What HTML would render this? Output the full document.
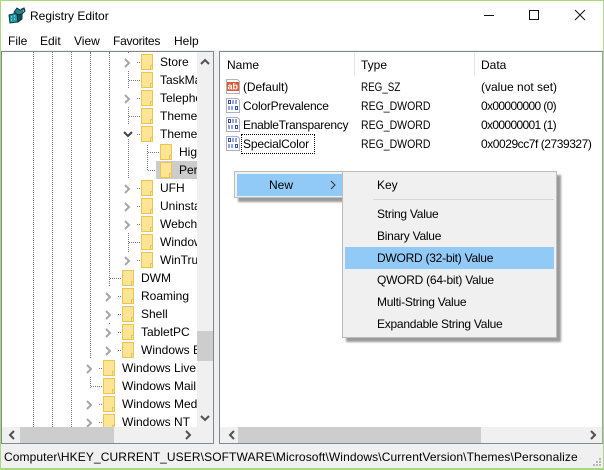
<!DOCTYPE html>
<html><head><meta charset="utf-8"><style>
html,body{margin:0;padding:0;background:#fff}
#w{position:relative;width:604px;height:470px;overflow:hidden;background:#fff;font:12px/16px "Liberation Sans",sans-serif;color:#000}
#w div,#w span,#w svg{position:absolute}
span{white-space:nowrap}
.t{overflow:hidden}
.f{width:10px;height:14px;background:#fde595;border:1px solid #eac552;box-sizing:content-box}
.f:after{content:"";position:absolute;right:-1px;bottom:-1px;width:1px;height:3px;border:1px solid #eac552;background:#fde595}
.v{width:0;border-left:1px dotted #777}
.h{height:0;border-top:1px dotted #777}
.m{background:#fff;height:18px}
.r{transform:scaleX(.875);transform-origin:0 0}
.n{letter-spacing:-.25px}
</style></head><body><div id="w">
<!-- window border -->
<div style="left:0;top:0;width:604px;height:1px;background:#a9d97c"></div>
<div style="left:0;top:0;width:1px;height:470px;background:#a9d97c"></div>
<div style="left:603px;top:0;width:1px;height:470px;background:#a9d97c"></div>
<div style="left:0;top:468px;width:604px;height:2px;background:#a9d97c"></div>

<!-- title -->
<svg style="left:8px;top:7px" width="18" height="17" viewBox="0 0 18 17"><path d="M1 8l8-2 1 9-8 1z" fill="#1f9aa2" stroke="#0b2f3a"/><path d="M9 6l5-2v8l-4 3z" fill="#0d5060" stroke="#0b2f3a"/><path d="M6 5l3-4 3 2 4-2 1 3-3 3-4 1z" fill="#2a7f8a" stroke="#0b2f3a"/><path d="M3 10h1M6 9h1M3 13h1M6 12h1M12 2h1M15 4h1" stroke="#c8f2f2"/></svg>
<span style="left:30px;top:8px">Registry Editor</span>
<div style="left:484px;top:15px;width:10px;height:1px;background:#111"></div>
<div style="left:529px;top:10px;width:8px;height:8px;border:1px solid #111"></div>
<svg style="left:574px;top:9px" width="12" height="12" viewBox="0 0 12 12"><path d="M1 1l10 10M11 1L1 11" stroke="#111" fill="none"/></svg>

<!-- menu -->
<span style="left:8px;top:33px">File</span>
<span style="left:40px;top:33px">Edit</span>
<span style="left:74px;top:33px">View</span>
<span class="n" style="left:113px;top:33px">Favorites</span>
<span style="left:174px;top:33px">Help</span>

<!-- body background -->
<div style="left:1px;top:50px;width:602px;height:395px;background:#f0f0f0"></div>
<!-- left pane -->
<div style="left:1px;top:51px;width:213px;height:393px;background:#fff;border:1px solid #828790;box-sizing:border-box;overflow:hidden"></div>
<div class="t" style="left:2px;top:52px;width:195px;height:375px" id="tree">
<div style="left:-2px;top:-52px;width:197px;height:427px">
<div class="v" style="left:33px;top:52px;height:375px"></div>
<div class="v" style="left:52px;top:52px;height:375px"></div>
<div class="v" style="left:71px;top:52px;height:375px"></div>
<div class="v" style="left:90px;top:52px;height:336px"></div>
<div class="v" style="left:109px;top:52px;height:272px"></div>
<div class="v" style="left:128px;top:52px;height:200px"></div>
<div class="v" style="left:147px;top:145px;height:25px"></div>

<!-- masks: tree lines are hidden behind expander rows -->
<div class="m" style="left:124px;top:53px;width:10px"></div>
<div class="m" style="left:124px;top:89px;width:10px"></div>
<div class="m" style="left:124px;top:125px;width:10px;height:14px"></div>
<div class="m" style="left:124px;top:179px;width:10px"></div>
<div class="m" style="left:124px;top:197px;width:10px"></div>
<div class="m" style="left:124px;top:215px;width:10px"></div>
<div class="m" style="left:105px;top:287px;width:10px"></div>
<div class="m" style="left:105px;top:305px;width:10px"></div>
<div class="m" style="left:86px;top:359px;width:10px"></div>
<div class="m" style="left:86px;top:395px;width:10px"></div>

<div class="h" style="left:129px;top:80px;width:11px"></div>
<div class="h" style="left:129px;top:116px;width:11px"></div>
<div class="h" style="left:129px;top:242px;width:11px"></div>
<div class="h" style="left:110px;top:278px;width:11px"></div>
<div class="h" style="left:91px;top:386px;width:11px"></div>
<div class="h" style="left:148px;top:152px;width:11px"></div>
<div class="h" style="left:148px;top:170px;width:11px"></div>
<div class="h" style="left:137px;top:62px;width:3px"></div>
<div class="h" style="left:137px;top:98px;width:3px"></div>
<div class="h" style="left:137px;top:134px;width:3px"></div>
<div class="h" style="left:137px;top:188px;width:3px"></div>
<div class="h" style="left:137px;top:206px;width:3px"></div>
<div class="h" style="left:137px;top:224px;width:3px"></div>
<div class="h" style="left:137px;top:260px;width:3px"></div>
<div class="h" style="left:118px;top:296px;width:3px"></div>
<div class="h" style="left:118px;top:314px;width:3px"></div>
<div class="h" style="left:118px;top:332px;width:3px"></div>
<div class="h" style="left:118px;top:350px;width:3px"></div>
<div class="h" style="left:99px;top:368px;width:3px"></div>
<div class="h" style="left:99px;top:404px;width:3px"></div>
<div class="h" style="left:99px;top:422px;width:3px"></div>

<div style="left:156px;top:161px;width:41px;height:18px;background:#cccccc"></div>

<svg style="left:0;top:0" width="197" height="427" viewBox="0 0 197 427" fill="none" stroke="#a6a6a6" stroke-width="2">
<path d="M125 59l4 4-4 4M125 95l4 4-4 4M125 185l4 4-4 4M125 203l4 4-4 4M125 221l4 4-4 4M125 257l4 4-4 4M106 293l4 4-4 4M106 311l4 4-4 4M106 329l4 4-4 4M106 347l4 4-4 4M87 365l4 4-4 4M87 401l4 4-4 4M87 419l4 4-4 4"/>
<path d="M124 132l4 4 4-4" stroke="#404040"/>
</svg>

<div class="f" style="left:141px;top:54px"></div><span style="left:160px;top:54px">Store</span>
<div class="f" style="left:141px;top:72px"></div><span style="left:160px;top:72px">TaskMa</span>
<div class="f" style="left:141px;top:90px"></div><span style="left:160px;top:90px">Telephony</span>
<div class="f" style="left:141px;top:108px"></div><span style="left:160px;top:108px">ThemeManager</span>
<div class="f" style="left:141px;top:126px"></div><span style="left:160px;top:126px">Themes</span>
<div class="f" style="left:160px;top:144px"></div><span style="left:179px;top:144px">High</span>
<div class="f" style="left:160px;top:162px"></div><span style="left:179px;top:162px">Personalize</span>
<div class="f" style="left:141px;top:180px"></div><span style="left:160px;top:180px">UFH</span>
<div class="f" style="left:141px;top:198px"></div><span style="left:160px;top:198px">Uninstall</span>
<div class="f" style="left:141px;top:216px"></div><span style="left:160px;top:216px">Webcheck</span>
<div class="f" style="left:141px;top:234px"></div><span style="left:160px;top:234px">WindowsUpdate</span>
<div class="f" style="left:141px;top:252px"></div><span style="left:160px;top:252px">WinTrust</span>
<div class="f" style="left:122px;top:270px"></div><span style="left:141px;top:270px">DWM</span>
<div class="f" style="left:122px;top:288px"></div><span style="left:141px;top:288px">Roaming</span>
<div class="f" style="left:122px;top:306px"></div><span style="left:141px;top:306px">Shell</span>
<div class="f" style="left:122px;top:324px"></div><span style="left:141px;top:324px">TabletPC</span>
<div class="f" style="left:122px;top:342px"></div><span style="left:141px;top:342px">Windows Error</span>
<div class="f" style="left:103px;top:360px"></div><span style="left:122px;top:360px">Windows Live</span>
<div class="f" style="left:103px;top:378px"></div><span style="left:122px;top:378px">Windows Mail</span>
<div class="f" style="left:103px;top:396px"></div><span style="left:122px;top:396px">Windows Media</span>
<div class="f" style="left:103px;top:414px"></div><span style="left:122px;top:414px">Windows NT</span>
</div></div>
<!-- left scrollbars -->
<div style="left:197px;top:52px;width:16px;height:375px;background:#f0f0f0"></div>
<div style="left:197px;top:331px;width:16px;height:30px;background:#cdcdcd"></div>
<div style="left:2px;top:427px;width:211px;height:16px;background:#f0f0f0"></div>
<div style="left:20px;top:427px;width:94px;height:16px;background:#cdcdcd"></div>
<svg style="left:0;top:0" width="604" height="470" viewBox="0 0 604 470" fill="none" stroke="#505050" stroke-width="2">
<path d="M201 64l4-4 4 4M201 416l4 4 4-4M14 431l-4 4 4 4M186 431l4 4-4 4"/>
</svg>

<!-- right pane -->
<div style="left:219px;top:51px;width:384px;height:393px;background:#fff;border:1px solid #828790;border-right-color:#a0a4aa;box-sizing:border-box"></div>
<div style="left:354px;top:53px;width:1px;height:23px;background:#e5e5e5"></div>
<div style="left:474px;top:53px;width:1px;height:23px;background:#e5e5e5"></div>
<span style="left:227px;top:57px">Name</span>
<span style="left:361px;top:57px">Type</span>
<span style="left:481px;top:57px">Data</span>

<svg style="left:225px;top:78px" width="16" height="76" viewBox="0 0 16 76">
<path d="M1.500 1.500h11l2 2v12h-13z" fill="#fff" stroke="#b4b4b4"/>
<rect x="2" y="4" width="12" height="9" fill="#dc5a32"/>
<text x="2.500" y="11.500" font-family="Liberation Sans" font-weight="bold" font-size="9" fill="#fff">ab</text>
<g fill="none" stroke="#2b4bb8">
<g id="a">
<path d="M1.500 20.500h11l2 2v12h-13z" fill="#fff" stroke="#a8b0cc"/>
<path d="M3.500 22.500h2v3h-2zM8 22v4M11 22v4M4 28v4M7 28v4M10.500 28.500h2v3h-2z"/>
</g>
<path d="M1.500 39.500h11l2 2v12h-13z" fill="#fff" stroke="#a8b0cc"/>
<path d="M3.500 41.500h2v3h-2zM8 41v4M11 41v4M4 47v4M7 47v4M10.500 47.500h2v3h-2z"/>
<path d="M1.500 58.500h11l2 2v12h-13z" fill="#fff" stroke="#a8b0cc"/>
<path d="M3.500 60.500h2v3h-2zM8 60v4M11 60v4M4 66v4M7 66v4M10.500 66.500h2v3h-2z"/>
</g></svg>

<span style="left:243px;top:79px;letter-spacing:-.1px">(Default)</span><span class="r" style="left:361px;top:79px;transform:scaleX(.82)">REG_SZ</span><span style="left:481px;top:79px">(value not set)</span>
<span style="left:243px;top:98px;letter-spacing:-.2px">ColorPrevalence</span><span class="r" style="left:361px;top:98px">REG_DWORD</span><span style="left:481px;top:98px;letter-spacing:-.65px">0x00000000 (0)</span>
<span style="left:243px;top:117px;letter-spacing:-.28px">EnableTransparency</span><span class="r" style="left:361px;top:117px">REG_DWORD</span><span style="left:481px;top:117px;letter-spacing:-.65px">0x00000001 (1)</span>
<span style="left:243px;top:136px;letter-spacing:-.17px">SpecialColor</span><span class="r" style="left:361px;top:136px">REG_DWORD</span><span style="left:481px;top:136px;letter-spacing:-.45px">0x0029cc7f (2739327)</span>
<div style="left:241px;top:134px;width:72px;height:18px;border:1px dotted #000"></div>

<!-- right scrollbar -->
<div style="left:220px;top:427px;width:382px;height:16px;background:#f0f0f0"></div>
<div style="left:238px;top:427px;width:243px;height:16px;background:#cdcdcd"></div>
<svg style="left:0;top:0" width="604" height="470" viewBox="0 0 604 470" fill="none" stroke="#505050" stroke-width="2">
<path d="M234 431l-4 4 4 4M591 431l4 4-4 4"/>
</svg>

<!-- status bar -->
<div style="left:1px;top:445px;width:602px;height:23px;background:#f0f0f0"></div>
<span style="left:4px;top:449px;letter-spacing:.1px">Computer\HKEY_CURRENT_USER\SOFTWARE\Microsoft\Windows\CurrentVersion\Themes\Personalize</span>
<svg style="left:592px;top:457px" width="10" height="10" viewBox="0 0 10 10" fill="#b8b8b8"><path d="M7 1h2v2H7zM4 4h2v2H4zM7 4h2v2H7zM1 7h2v2H1zM4 7h2v2H4zM7 7h2v2H7z"/></svg>

<!-- context menu -->
<div style="left:234px;top:171px;width:110px;height:27px;background:#f0f0f0;border:1px solid #bcbcbc;box-sizing:border-box;box-shadow:4px 4px 2px #9a9a9a"></div>
<div style="left:237px;top:174px;width:106px;height:22px;background:#91c9f7"></div>
<span style="left:269px;top:177px">New</span>
<svg style="left:330px;top:180px" width="6" height="10" viewBox="0 0 6 10"><path d="M1 1l4 4-4 4" fill="none" stroke="#333"/></svg>
<div style="left:342px;top:171px;width:215px;height:167px;background:#f0f0f0;border:1px solid #bcbcbc;box-sizing:border-box;box-shadow:4px 4px 2px #9a9a9a"></div>
<div style="left:373px;top:199px;width:181px;height:1px;background:#d7d7d7"></div>
<div style="left:345px;top:247px;width:209px;height:22px;background:#91c9f7"></div>
<span style="left:377px;top:177px">Key</span>
<span class="n" style="left:377px;top:206px">String Value</span>
<span class="n" style="left:377px;top:228px">Binary Value</span>
<span class="n" style="left:377px;top:250px">DWORD (32-bit) Value</span>
<span class="n" style="left:377px;top:272px">QWORD (64-bit) Value</span>
<span class="n" style="left:377px;top:294px">Multi-String Value</span>
<span class="n" style="left:377px;top:316px">Expandable String Value</span>
</div></body></html>
